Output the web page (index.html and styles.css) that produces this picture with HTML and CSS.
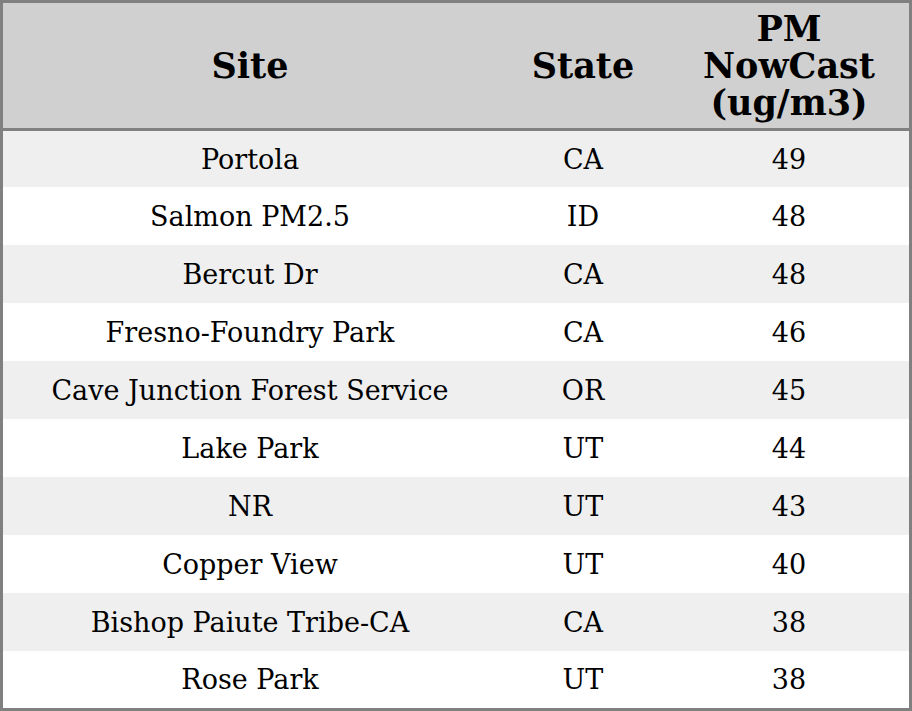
FILE: index.html
```html
<!DOCTYPE html>
<html>
<head>
<meta charset="utf-8">
<link rel="stylesheet" href="styles.css">
</head>
<body>
<table class="data">
  <colgroup>
    <col class="c-site">
    <col class="c-state">
    <col class="c-pm">
  </colgroup>
  <thead>
    <tr>
      <th>Site</th>
      <th>State</th>
      <th>PM<br>NowCast<br>(ug/m3)</th>
    </tr>
  </thead>
  <tbody>
    <tr><td>Portola</td><td>CA</td><td>49</td></tr>
    <tr><td>Salmon PM2.5</td><td>ID</td><td>48</td></tr>
    <tr><td>Bercut Dr</td><td>CA</td><td>48</td></tr>
    <tr><td>Fresno-Foundry Park</td><td>CA</td><td>46</td></tr>
    <tr><td>Cave Junction Forest Service</td><td>OR</td><td>45</td></tr>
    <tr><td>Lake Park</td><td>UT</td><td>44</td></tr>
    <tr><td>NR</td><td>UT</td><td>43</td></tr>
    <tr><td>Copper View</td><td>UT</td><td>40</td></tr>
    <tr><td>Bishop Paiute Tribe-CA</td><td>CA</td><td>38</td></tr>
    <tr><td>Rose Park</td><td>UT</td><td>38</td></tr>
  </tbody>
</table>
</body>
</html>
```

FILE: styles.css
```css
html, body {
  margin: 0;
  padding: 0;
  background: #ffffff;
}

.data {
  width: 912px;
  border-collapse: separate;
  border-spacing: 0;
  border: 3px solid #808080;
  table-layout: fixed;
  font-family: "DejaVu Serif", serif;
  color: #000;
}

.c-site { width: 494px; }
.c-state { width: 172px; }
.c-pm { width: 240px; }

.data th {
  background: #d0d0d0;
  font-size: 35px;
  font-weight: bold;
  line-height: 37px;
  height: 128px;
  padding: 0;
  text-align: center;
  vertical-align: middle;
  border-bottom: 3px solid #808080;
  box-sizing: border-box;
}

.data td {
  font-size: 27px;
  height: 58px;
  padding: 0;
  text-align: center;
  vertical-align: middle;
  box-sizing: border-box;
}

.data tbody tr:nth-child(odd) td {
  background: #efefef;
}

.data tbody tr:first-child td {
  height: 56px;
}

.data tbody tr:last-child td {
  height: 57px;
}
```
